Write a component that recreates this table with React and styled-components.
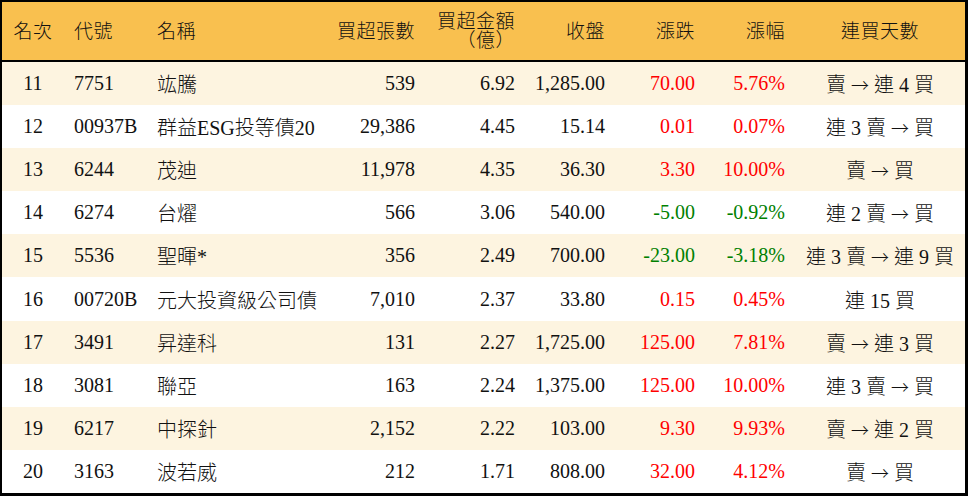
import React from 'react';
import styled, { createGlobalStyle } from 'styled-components';

const GlobalStyle = createGlobalStyle`
  html, body {
    margin: 0;
    padding: 0;
    background: #fff;
  }
  body {
    font-family: "Liberation Serif", "Noto Sans CJK TC", serif;
  }
`;

const COLUMNS = '62px 83px 178px 100px 100px 90px 90px 90px 170px';

const Table = styled.div`
  box-sizing: border-box;
  width: 968px;
  height: 496px;
  border-style: solid;
  border-color: #000;
  border-width: 2px 3px 3px 2px;
  display: grid;
  grid-template-rows: 60px repeat(10, 1fr);
  overflow: hidden;
`;

const Row = styled.div`
  display: grid;
  grid-template-columns: ${COLUMNS};
  align-items: center;
  background: ${(p) => (p.$head ? '#f9c04f' : p.$shade ? '#fdf4e0' : '#fff')};
  border-bottom: ${(p) => (p.$head ? '2px solid #000' : 'none')};
  font-size: 20px;
  font-weight: 300;
  color: #111;
`;

const Cell = styled.div`
  box-sizing: border-box;
  padding: 0 10px;
  white-space: nowrap;
  text-align: ${(p) => p.$align || 'left'};
  color: ${(p) => p.$color || 'inherit'};
`;

const HeadCell = styled(Cell)`
  font-size: 19px;
  line-height: 19px;
  letter-spacing: 0.5px;
`;

const Arrow = styled.span`
  font-family: "Noto Sans CJK TC", sans-serif;
  font-size: 18px;
  font-weight: 300;
`;

const RED = '#ff0000';
const GREEN = '#008000';

const rows = [
  ['11', '7751', '竑騰', '539', '6.92', '1,285.00', '70.00', '5.76%', '賣 → 連 4 買'],
  ['12', '00937B', '群益ESG投等債20', '29,386', '4.45', '15.14', '0.01', '0.07%', '連 3 賣 → 買'],
  ['13', '6244', '茂迪', '11,978', '4.35', '36.30', '3.30', '10.00%', '賣 → 買'],
  ['14', '6274', '台燿', '566', '3.06', '540.00', '-5.00', '-0.92%', '連 2 賣 → 買'],
  ['15', '5536', '聖暉*', '356', '2.49', '700.00', '-23.00', '-3.18%', '連 3 賣 → 連 9 買'],
  ['16', '00720B', '元大投資級公司債', '7,010', '2.37', '33.80', '0.15', '0.45%', '連 15 買'],
  ['17', '3491', '昇達科', '131', '2.27', '1,725.00', '125.00', '7.81%', '賣 → 連 3 買'],
  ['18', '3081', '聯亞', '163', '2.24', '1,375.00', '125.00', '10.00%', '連 3 賣 → 買'],
  ['19', '6217', '中探針', '2,152', '2.22', '103.00', '9.30', '9.93%', '賣 → 連 2 買'],
  ['20', '3163', '波若威', '212', '1.71', '808.00', '32.00', '4.12%', '賣 → 買'],
];

function Streak({ text }) {
  const parts = text.split('→');
  if (parts.length === 1) return text;
  return (
    <>
      {parts[0]}
      <Arrow>→</Arrow>
      {parts[1]}
    </>
  );
}

export default function App() {
  return (
    <>
      <GlobalStyle />
      <Table>
        <Row $head>
          <HeadCell $align="center">名次</HeadCell>
          <HeadCell>代號</HeadCell>
          <HeadCell>名稱</HeadCell>
          <HeadCell $align="right">買超張數</HeadCell>
          <HeadCell $align="right">
            買超金額
            <br />
            （億）
          </HeadCell>
          <HeadCell $align="right">收盤</HeadCell>
          <HeadCell $align="right">漲跌</HeadCell>
          <HeadCell $align="right">漲幅</HeadCell>
          <HeadCell $align="center">連買天數</HeadCell>
        </Row>
        {rows.map((r, i) => {
          const tone = r[6].startsWith('-') ? GREEN : RED;
          return (
            <Row key={r[0]} $shade={i % 2 === 0}>
              <Cell $align="center">{r[0]}</Cell>
              <Cell>{r[1]}</Cell>
              <Cell>{r[2]}</Cell>
              <Cell $align="right">{r[3]}</Cell>
              <Cell $align="right">{r[4]}</Cell>
              <Cell $align="right">{r[5]}</Cell>
              <Cell $align="right" $color={tone}>{r[6]}</Cell>
              <Cell $align="right" $color={tone}>{r[7]}</Cell>
              <Cell $align="center"><Streak text={r[8]} /></Cell>
            </Row>
          );
        })}
      </Table>
    </>
  );
}
